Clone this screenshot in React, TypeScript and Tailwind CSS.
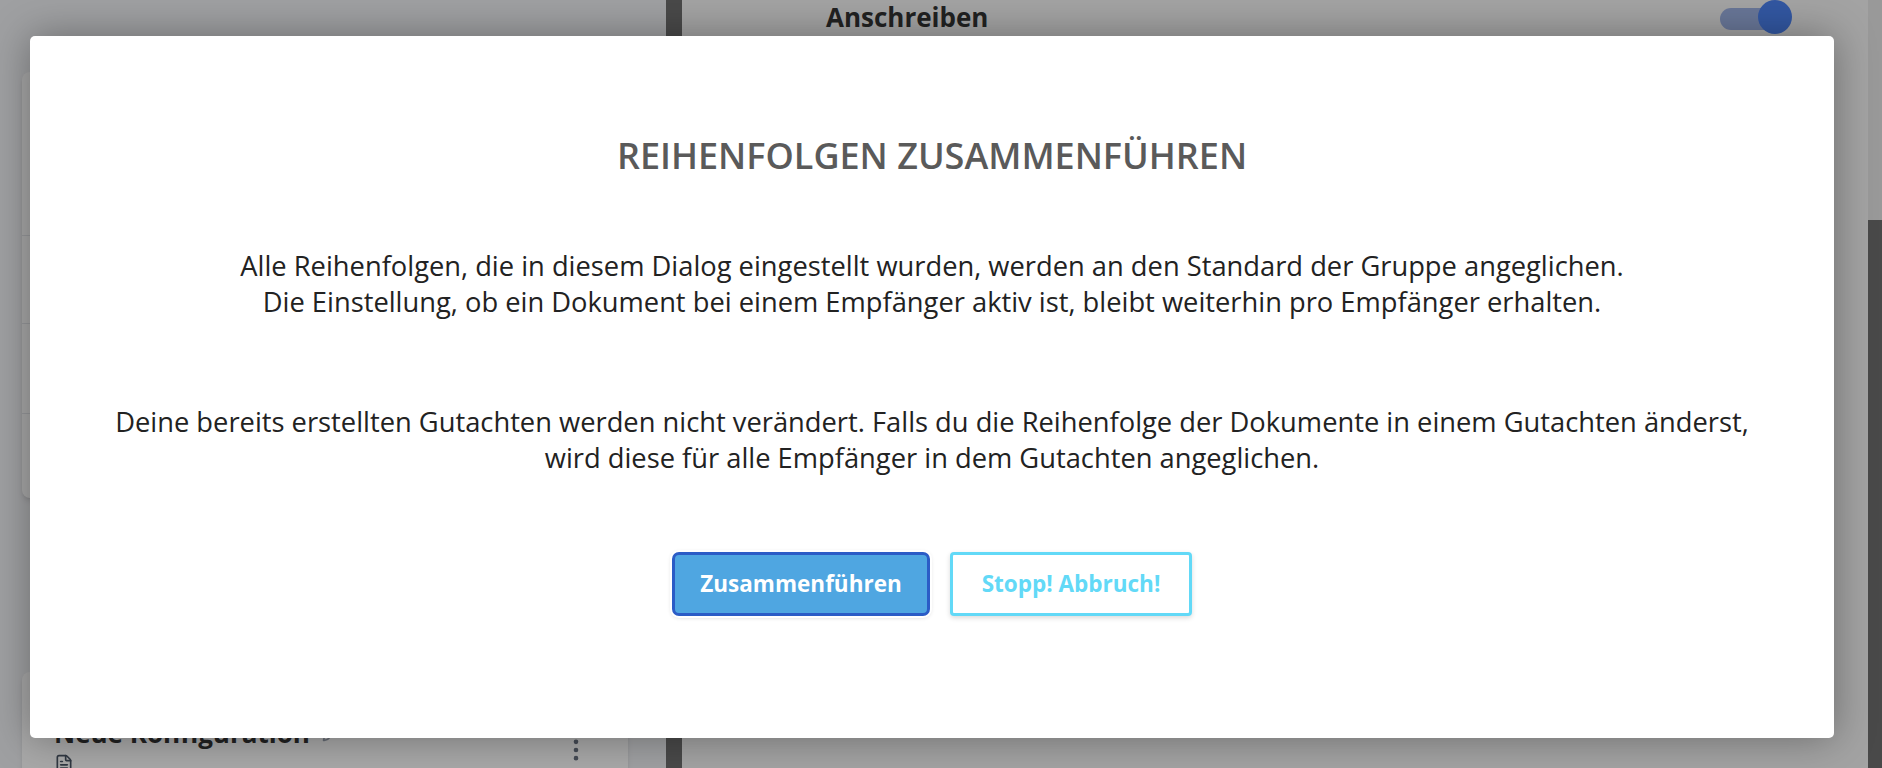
import { Pencil, FileText, MoreVertical } from "lucide-react";

// Merge dialog over the configuration page
export default function App() {
  return (
    <div className="relative h-screen w-full overflow-hidden font-['Open_Sans',sans-serif] bg-[#f2f3f6]">
      {/* page behind the modal */}
      <div className="flex h-full">
        {/* left column with cards */}
        <div className="w-[666px] shrink-0 pl-[22px] pr-[38px] pt-[72px] flex flex-col">
          <div className="shrink-0 rounded-lg bg-white shadow-md h-[426px] flex flex-col">
            <div className="h-[164px] border-b border-gray-200" />
            <div className="h-[88px] border-b border-gray-200" />
            <div className="h-[90px] border-b border-gray-200" />
          </div>
          <div className="shrink-0 mt-[174px] rounded-lg bg-white shadow-md h-[200px] pl-8 pr-[38px] pt-[44px] flex">
            <div className="flex-1">
              <div className="flex items-center gap-3 text-[26px] leading-[34px] font-bold text-[#333]">
                Neue Konfiguration
                <Pencil className="w-[18px] h-[18px] text-gray-400" />
              </div>
              <div className="mt-1 flex items-center gap-2 text-gray-600">
                <FileText className="w-5 h-5" />
              </div>
            </div>
            <MoreVertical className="w-7 h-7 text-gray-500 mt-[20px]" />
          </div>
        </div>

        {/* divider bar */}
        <div className="w-[16px] shrink-0 bg-[#6f6f6f]" />

        {/* right panel */}
        <div className="flex-1 bg-[#f8f8f8]">
          <div className="flex items-center justify-between h-[34px] pl-[144px] pr-[76px]">
            <span className="text-[26px] font-bold text-[#333] leading-none">Anschreiben</span>
            <div className="relative w-[72px] h-[34px]">
              <div className="absolute left-0 top-[8px] w-[60px] h-[22px] rounded-full bg-[#9fb3e6]" />
              <div className="absolute right-0 top-0 w-[34px] h-[34px] rounded-full bg-[#4d84f5]" />
            </div>
          </div>
        </div>

        {/* scrollbar */}
        <div className="w-[14px] shrink-0 bg-[#e8e8e8] flex flex-col">
          <div className="mt-[220px] flex-1 bg-[#6f6f6f]" />
        </div>
      </div>

      {/* overlay + dialog */}
      <div className="absolute inset-0 bg-black/[0.34] pl-[30px] pt-[36px]">
        <div className="w-[1804px] h-[702px] rounded-[5px] bg-white shadow-[0_0_40px_rgba(0,0,0,0.35)] flex flex-col items-center pt-[100px] text-center">
          <h2 className="text-[36px] leading-[40px] font-semibold text-[#5a5a5a]">
            REIHENFOLGEN ZUSAMMENFÜHREN
          </h2>

          <p className="mt-[72px] text-[27.3px] leading-[36px] text-[#222]">
            Alle Reihenfolgen, die in diesem Dialog eingestellt wurden, werden an den Standard der Gruppe angeglichen.
            <br />
            Die Einstellung, ob ein Dokument bei einem Empfänger aktiv ist, bleibt weiterhin pro Empfänger erhalten.
          </p>

          <p className="mt-[84px] text-[27.3px] leading-[36px] text-[#222]">
            Deine bereits erstellten Gutachten werden nicht verändert. Falls du die Reihenfolge der Dokumente in einem Gutachten änderst,
            <br />
            wird diese für alle Empfänger in dem Gutachten angeglichen.
          </p>

          <div className="mt-[76px] flex gap-[20px]">
            <button className="w-[258px] h-[64px] rounded-[7px] border-[3px] border-[#2b5cc6] bg-[#4fa6e1] text-white text-[22.5px] font-bold shadow-[0_0_0_2px_#ffffff,0_1px_5px_rgba(0,0,0,0.2)]">
              Zusammenführen
            </button>
            <button className="w-[242px] h-[64px] rounded-[4px] border-[3px] border-[#62d9f7] bg-white text-[#62d9f7] text-[22.5px] font-bold shadow-[0_2px_5px_rgba(0,0,0,0.15)]">
              Stopp! Abbruch!
            </button>
          </div>
        </div>
      </div>
    </div>
  );
}
